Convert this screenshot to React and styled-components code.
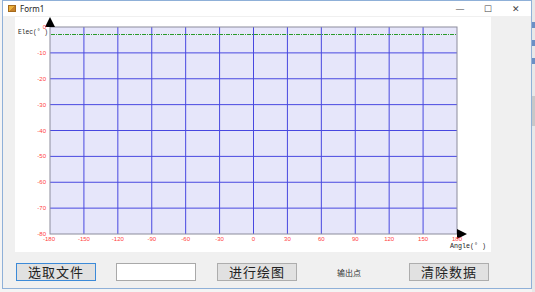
import React from "react";
import styled, { createGlobalStyle } from "styled-components";

const GlobalStyle = createGlobalStyle`
  html, body {
    margin: 0;
    padding: 0;
    background: #f3f3f3;
    font-family: "Noto Sans", "Noto Sans CJK SC", sans-serif;
  }
`;

const Desktop = styled.div`
  width: 535px;
  height: 292px;
  position: relative;
  overflow: hidden;
  background: #f4f4f4;
  padding-left: 2px;
  box-sizing: border-box;
`;

const Window = styled.div`
  width: 530px;
  height: 289px;
  box-sizing: border-box;
  border: 1px solid #8fb0d8;
  background: #f0f0f0;
  display: flex;
  flex-direction: column;
`;

const TitleBar = styled.div`
  height: 15px;
  background: #ffffff;
  display: flex;
  align-items: center;
  padding-left: 5px;
  font-size: 8px;
  color: #222;
`;

const AppIcon = styled.span`
  width: 8px;
  height: 7px;
  margin-right: 4px;
  background: linear-gradient(135deg, #e9b13c 0 50%, #c7822a 50% 100%);
  border: 1px solid #a56a1c;
  box-sizing: border-box;
`;

const Title = styled.span`
  flex: 1;
`;

const Controls = styled.div`
  display: flex;
  align-items: center;
  height: 100%;
  padding-right: 1px;
`;

const Ctrl = styled.div`
  width: 28px;
  height: 100%;
  display: flex;
  align-items: center;
  justify-content: center;
  color: #444;
  font-size: 9px;
`;

const Client = styled.div`
  flex: 1;
  display: flex;
  flex-direction: column;
  padding: 1px 0 0 12px;
`;

const ChartPanel = styled.div`
  width: 476px;
  height: 235px;
  background: #ffffff;
`;

const ButtonRow = styled.div`
  display: flex;
  align-items: center;
  margin-top: 11px;
  padding-left: 1px;
`;

const Button = styled.button`
  width: 80px;
  height: 18px;
  padding: 0;
  margin-right: ${(p) => p.$gap}px;
  box-sizing: border-box;
  background: #e1e1e1;
  border: 1px solid ${(p) => (p.$focused ? "#3c8ad8" : "#adadad")};
  font-family: "Noto Sans CJK SC", serif;
  font-size: 13px;
  line-height: 16px;
  color: #222;
  letter-spacing: 1px;
`;

const TextBox = styled.input`
  width: 80px;
  height: 18px;
  box-sizing: border-box;
  border: 1px solid #a9a9a9;
  background: #fff;
  margin-right: 21px;
  padding: 0;
`;

const OutLabel = styled.span`
  width: 112px;
  padding-left: 40px;
  box-sizing: border-box;
  font-family: "Noto Sans CJK SC", sans-serif;
  font-size: 8px;
  color: #333;
`;

const EdgeStrip = styled.div`
  position: absolute;
  right: 0;
  top: 0;
  width: 3px;
  height: 292px;
  background: #e8e8e8;
`;

const EdgeMark = styled.div`
  position: absolute;
  left: 0;
  top: ${(p) => p.$top}px;
  width: 3px;
  height: ${(p) => p.$h}px;
  background: ${(p) => p.$c};
`;

// plot geometry in chart-panel coordinates
const X0 = 35;
const X1 = 442;
const Y0 = 10;
const Y1 = 217;
const xs = Array.from({ length: 13 }, (_, i) => -180 + i * 30);
const ys = Array.from({ length: 9 }, (_, i) => -i * 10);
const px = (v) => X0 + ((v + 180) / 360) * (X1 - X0);
const py = (v) => Y0 + (-v / 80) * (Y1 - Y0);

function Chart() {
  return (
    <svg width="476" height="235" viewBox="0 0 476 235">
      <rect x={X0} y={Y0} width={X1 - X0} height={Y1 - Y0} fill="#e6e6fa" />
      {xs.slice(1, -1).map((v) => (
        <line key={"x" + v} x1={px(v)} x2={px(v)} y1={Y0} y2={Y1} stroke="#4848e0" strokeWidth="1" />
      ))}
      {ys.slice(1, -1).map((v) => (
        <line key={"y" + v} x1={X0} x2={X1} y1={py(v)} y2={py(v)} stroke="#4848e0" strokeWidth="1" />
      ))}
      <rect x={X0} y={Y0} width={X1 - X0} height={Y1 - Y0} fill="none" stroke="#8c8c9c" strokeWidth="1" />
      <line x1={X0 + 1} x2={X1} y1={17.5} y2={17.5} stroke="#2a9a2a" strokeWidth="1" strokeDasharray="4 1 1 1" />
      <polygon points={`${X0 - 5},${Y0} ${X0 + 5},${Y0} ${X0},0`} fill="#000" />
      <polygon points={`${X1},${Y1 - 5} ${X1},${Y1 + 5} ${X1 + 10},${Y1}`} fill="#000" />
      <g fontFamily="Liberation Sans, sans-serif" fontSize="6" fill="#ff4040">
        {ys.map((v) => (
          <text key={"ly" + v} x={X0 - 4} y={py(v) + 2} textAnchor="end">
            {v}
          </text>
        ))}
        {xs.map((v) => (
          <text key={"lx" + v} x={px(v) - (v === -180 ? 1 : 0)} y={Y1 + 7} textAnchor="middle">
            {v}
          </text>
        ))}
      </g>
      <g fontFamily="Liberation Mono, monospace" fontSize="7.5" fill="#222">
        <text x="3" y="17" textLength="30" lengthAdjust="spacingAndGlyphs">Elec(° )</text>
        <text x="435" y="231" textLength="36" lengthAdjust="spacingAndGlyphs">Angle(° )</text>
      </g>
    </svg>
  );
}

export default function App() {
  return (
    <Desktop>
      <GlobalStyle />
      <Window>
        <TitleBar>
          <AppIcon />
          <Title>Form1</Title>
          <Controls>
            <Ctrl>—</Ctrl>
            <Ctrl>☐</Ctrl>
            <Ctrl>✕</Ctrl>
          </Controls>
        </TitleBar>
        <Client>
          <ChartPanel>
            <Chart />
          </ChartPanel>
          <ButtonRow>
            <Button $focused $gap={20}>选取文件</Button>
            <TextBox />
            <Button $gap={0}>进行绘图</Button>
            <OutLabel>输出点</OutLabel>
            <Button $gap={0}>清除数据</Button>
          </ButtonRow>
        </Client>
      </Window>
      <EdgeStrip>
        <EdgeMark $top={22} $h={6} $c="#6b8fc4" />
        <EdgeMark $top={40} $h={6} $c="#6b8fc4" />
        <EdgeMark $top={58} $h={6} $c="#6b8fc4" />
        <EdgeMark $top={96} $h={30} $c="#c8c8c8" />
      </EdgeStrip>
    </Desktop>
  );
}
